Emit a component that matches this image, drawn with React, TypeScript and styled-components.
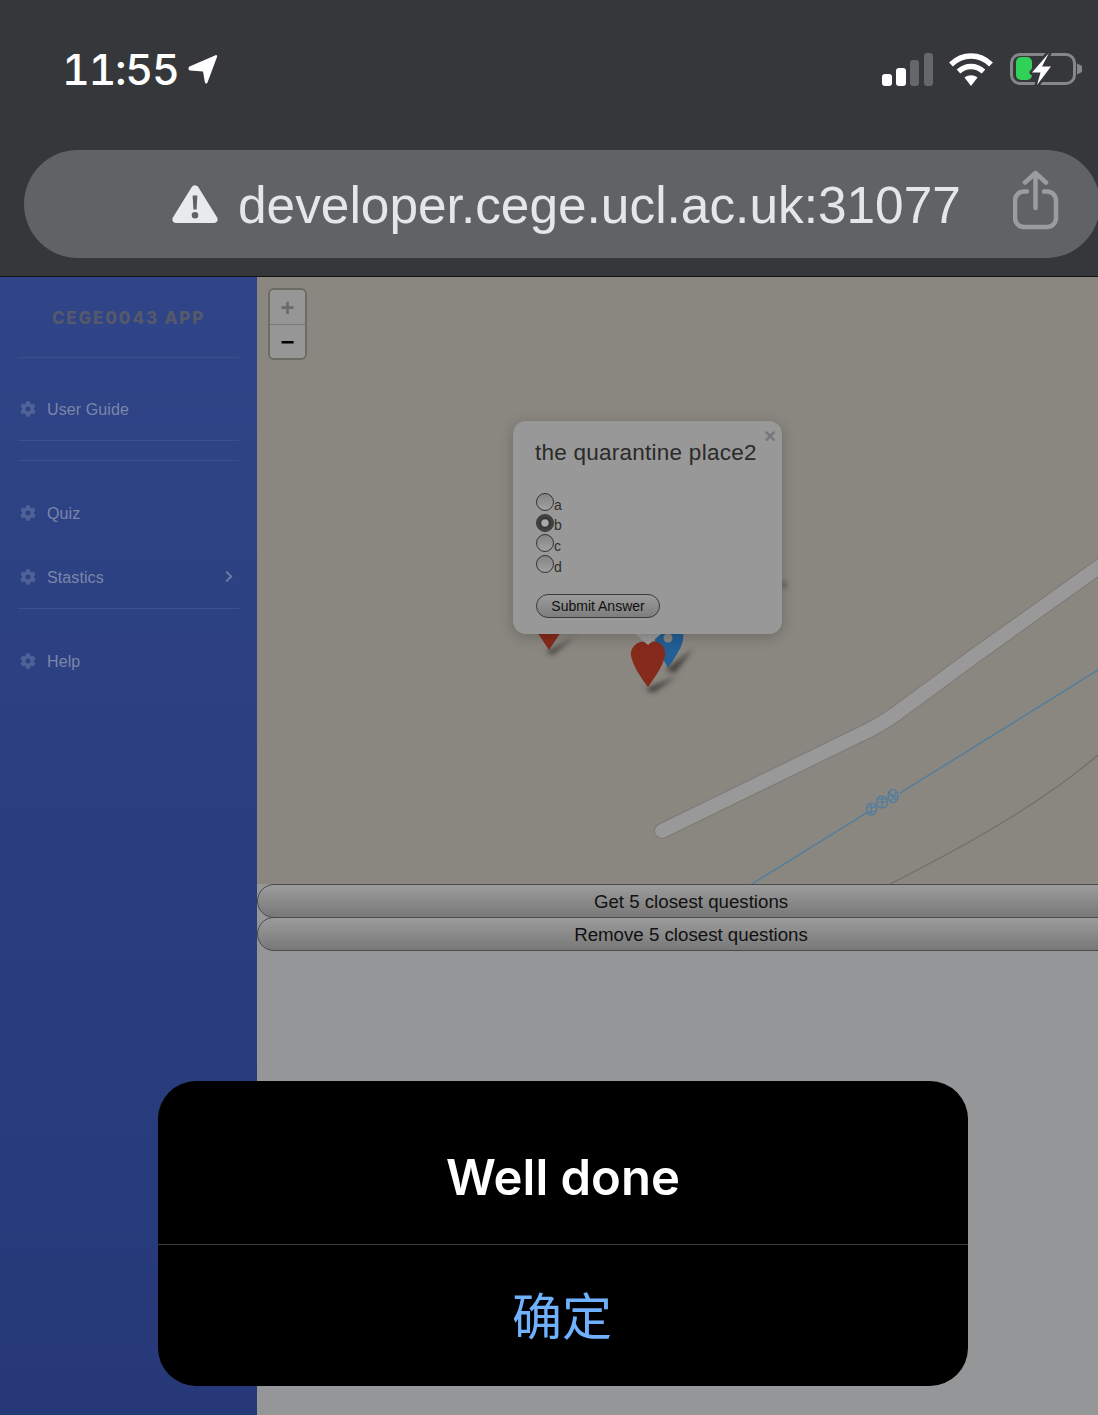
import styled, { createGlobalStyle } from "styled-components";
import { FaChevronRight, FaCog } from "react-icons/fa";

const GlobalStyle = createGlobalStyle`
  html, body {
    margin: 0;
    padding: 0;
    background: #959698;
  }

  * {
    box-sizing: border-box;
  }
`;

const Page = styled.div`
  position: relative;
  width: 1098px;
  height: 1415px;
  overflow: hidden;
  display: flex;
  flex-direction: column;
  background: #959698;
  font-family: "Liberation Sans", Arial, sans-serif;
`;

const BrowserHeader = styled.header`
  height: 277px;
  flex: none;
  background: #36373b;
  border-bottom: 1px solid #111214;
`;

const StatusBar = styled.div`
  height: 150px;
  padding: 46px 16px 0 62px;
  display: flex;
  align-items: flex-start;
  justify-content: space-between;
`;

const Clock = styled.div`
  display: flex;
  align-items: center;
  gap: 9px;
  height: 46px;
  color: #fff;
  font-family: Inter, Roboto, sans-serif;
  font-size: 43px;
  font-weight: 500;
  font-variant-numeric: tabular-nums;
  letter-spacing: -1.3px;
`;

const StatusIcons = styled.div`
  display: flex;
  align-items: center;
  gap: 15px;
  margin-top: 5px;
`;

const AddressBar = styled.div`
  width: 1076px;
  height: 108px;
  margin-left: 24px;
  padding-left: 148px;
  display: flex;
  align-items: center;
  gap: 20px;
  border-radius: 54px;
  background: #5f6366;
  color: #e8e9ed;
`;

const Url = styled.span`
  width: 722px;
  margin-top: 2px;
  font-size: 51.4px;
  line-height: 108px;
  white-space: nowrap;
  color: #e5e6ea;
`;

const ShareSlot = styled.span`
  display: flex;
  margin-left: 33px;
  margin-top: -8px;
`;

const Main = styled.main`
  flex: 1;
  display: flex;
  min-height: 0;
`;

const Sidebar = styled.nav`
  width: 257px;
  flex: none;
  padding: 0 18px;
  background: linear-gradient(180deg, #2f4587 0%, #263878 100%);
`;

const Brand = styled.div`
  height: 80px;
  display: flex;
  align-items: center;
  justify-content: center;
  color: #56586c;
  font-family: Inter, "Liberation Sans", sans-serif;
  font-size: 17px;
  font-weight: 800;
  letter-spacing: 1.8px;
  padding-top: 1px;
`;

const Divider = styled.div<{ $top?: number }>`
  height: 1px;
  margin-top: ${({ $top }) => $top ?? 0}px;
  background: #3b5090;
`;

const NavItem = styled.a<{ $top: number }>`
  height: 62px;
  margin-top: ${({ $top }) => $top}px;
  padding: 2px 5px 0 2px;
  display: flex;
  align-items: center;
  gap: 11px;
  color: #7b86aa;
  font-family: "Liberation Sans", sans-serif;
  font-size: 16px;
  letter-spacing: 0.1px;
  svg:first-child {
    width: 16px;
    height: 16px;
    margin-top: -2px;
    color: #4f6196;
  }
`;

const NavArrow = styled(FaChevronRight)`
  width: 10px;
  height: 13px;
  margin-left: auto;
  margin-top: -4px;
  color: #6c79a3;
`;

const Content = styled.section`
  flex: 1;
  min-width: 0;
  overflow: hidden;
`;

const MapPane = styled.div`
  position: relative;
  height: 607px;
  overflow: hidden;
  background: #8a8780;
`;

const MapDrawing = styled.svg`
  position: absolute;
  inset: 0;
`;

const ZoomControl = styled.div`
  position: absolute;
  left: 11px;
  top: 11px;
  width: 39px;
  border: 2px solid #6e6b66;
  border-radius: 6px;
  overflow: hidden;
`;

const ZoomButton = styled.div<{ $muted?: boolean }>`
  height: 34px;
  padding-top: ${({ $muted }) => ($muted ? 2 : 0)}px;
  display: flex;
  align-items: center;
  justify-content: center;
  background: #969696;
  color: ${({ $muted }) => ($muted ? "#6b6b6b" : "#000")};
  font-family: "Liberation Sans", sans-serif;
  font-size: 24px;
  font-weight: 700;
  & + & {
    border-top: 1px solid #7a7a7a;
  }
`;

const Popup = styled.div`
  position: absolute;
  left: 256px;
  top: 144px;
  width: 269px;
  height: 213px;
  padding: 19px 22px;
  border-radius: 13px;
  background: #989898;
  box-shadow: 0 3px 14px rgba(0, 0, 0, 0.22);
  color: #2a2a2a;
`;

const PopupClose = styled.span`
  position: absolute;
  right: 6px;
  top: 4px;
  color: #767676;
  font-size: 20px;
  font-weight: 700;
  line-height: 22px;
`;

const PopupTitle = styled.div`
  font-size: 22.5px;
  letter-spacing: 0.25px;
  line-height: 26px;
  white-space: nowrap;
  margin-bottom: 26px;
`;

const AnswerList = styled.div`
  display: flex;
  flex-direction: column;
  margin-left: 1px;
  margin-bottom: 20px;
`;

const AnswerRow = styled.label`
  height: 20.6px;
  display: flex;
  align-items: center;
  font-size: 14px;
  color: #2e2e2e;
  span {
    margin-top: 5px;
  }
`;

const Radio = styled.input.attrs({ type: "radio", name: "answer" })`
  appearance: none;
  width: 18px;
  height: 18px;
  margin: 0;
  border: 1px solid #333;
  border-radius: 50%;
  background: linear-gradient(180deg, #858585 0%, #a0a0a0 100%);
  &:checked {
    background: radial-gradient(circle, #aaa 0 3px, #333 4.5px, #5c5c5c 100%);
  }
`;

const SubmitButton = styled.button`
  display: block;
  width: 124px;
  height: 24px;
  margin-left: 1px;
  padding: 0;
  border: 1px solid #3a3a3a;
  border-radius: 12px;
  background: linear-gradient(180deg, #9c9c9c 0%, #7d7d7d 100%);
  color: #111;
  font-family: "Liberation Sans", sans-serif;
  font-size: 14px;
`;

const ActionButton = styled.button`
  display: block;
  width: 868px;
  height: 34px;
  margin: 0;
  padding: 2px 0 0;
  border: 1px solid #4a4a4a;
  border-radius: 17px;
  background: linear-gradient(180deg, #9c9c9c 0%, #787878 100%);
  color: #111;
  font-family: "Liberation Sans", sans-serif;
  font-size: 18.7px;
  & + & {
    margin-top: -1px;
    padding-top: 2px;
  }
`;

const AlertCard = styled.div`
  position: absolute;
  left: 158px;
  top: 1081px;
  width: 810px;
  height: 305px;
  border-radius: 38px;
  background: #000;
  display: flex;
  flex-direction: column;
`;

const AlertTitle = styled.div`
  height: 164px;
  display: flex;
  align-items: center;
  justify-content: center;
  padding-top: 30px;
  color: #fff;
  font-family: Inter, Roboto, sans-serif;
  font-size: 49px;
  font-weight: 600;
  border-bottom: 1px solid #3a3a3a;
`;

const AlertAction = styled.div`
  flex: 1;
  display: flex;
  align-items: center;
  justify-content: center;
  padding: 0 2px 6px 0;
  color: #6fb1fd;
  font-family: "Noto Sans CJK SC", sans-serif;
  font-size: 50px;
  font-weight: 400;
`;

const LocationArrow = () => (
  <svg width="30" height="31" viewBox="0 0 30 31">
    <path
      d="M1.500 12.500 27.500 1.200c1-.5 2 .5 1.600 1.500L19.500 28.500c-.6 1.500-2.300 1.200-2.600-.3L15 17.500 2 16.500C.3 16.300 0 13.300 1.500 12.500Z"
      fill="#fff"
    />
  </svg>
);

const SignalIcon = () => (
  <svg width="52" height="33" viewBox="0 0 52 33">
    <rect x="0" y="21" width="10" height="12" rx="3" fill="#fff" />
    <rect x="14" y="15" width="10" height="18" rx="3" fill="#fff" />
    <rect x="28" y="7" width="9" height="26" rx="3" fill="#66676a" />
    <rect x="42" y="0" width="9" height="33" rx="3" fill="#66676a" />
  </svg>
);

const WifiIcon = () => (
  <svg width="44" height="33" viewBox="0 0 44 33">
    <g fill="none" stroke="#fff" strokeWidth="5.400">
      <path d="M2 11.500C13.500.2 30.500.2 42 11.500" />
      <path d="M9.500 18.500c7.500-6.600 17.500-6.600 25 0" />
    </g>
    <path d="M15.500 24.600c4-3.100 9-3.100 13 0L22 33Z" fill="#fff" />
  </svg>
);

const BatteryIcon = () => (
  <svg width="74" height="36" viewBox="0 0 74 36">
    <rect x="3.500" y="3.500" width="63" height="29" rx="8.500" fill="none" stroke="#85878a" strokeWidth="3" />
    <path d="M69 12.500 74 15v6l-5 2.500Z" fill="#85878a" />
    <rect x="8" y="6" width="16" height="23" rx="5" fill="#31d158" />
    <path
      d="M41 2 24 21.500h8.500L29 34 43 15.500h-9Z"
      fill="#36373b"
      stroke="#36373b"
      strokeWidth="5"
      strokeLinejoin="round"
    />
    <path d="M41 2 24 21.500h8.500L29 34 43 15.500h-9Z" fill="#fff" />
  </svg>
);

const WarningIcon = () => (
  <svg width="46" height="38" viewBox="0 0 46 38">
    <path
      fillRule="evenodd"
      d="M19.600 2.200c1.500-2.700 5.300-2.700 6.800 0l18.700 30.400c1.600 2.600-.3 5.400-3.400 5.400H4.300C1.200 38-.7 35.200.9 32.600ZM20.600 10.500l.8 14h3.200l.8-14ZM23 27a3.300 3.300 0 1 0 0 6.600 3.300 3.300 0 0 0 0-6.600Z"
      fill="#e9eaee"
    />
  </svg>
);

const ShareIcon = () => (
  <svg width="46" height="60" viewBox="0 0 46 60" fill="none" stroke="#999da0" strokeWidth="4.500" strokeLinecap="round" strokeLinejoin="round">
    <path d="M14 21.500h-3a9 9 0 0 0-9 9V48a9 9 0 0 0 9 9h23a9 9 0 0 0 9-9V30.500a9 9 0 0 0-9-9h-3" />
    <path d="M22.500 38V4" />
    <path d="M12 12.500 22.500 3 33 12.500" />
  </svg>
);

const MapArt = () => (
  <MapDrawing width="841" height="607" viewBox="0 0 841 607">
    <defs>
      <filter id="soft" x="-40%" y="-40%" width="180%" height="180%">
        <feGaussianBlur stdDeviation="2.400" />
      </filter>
    </defs>
    <g fill="none" strokeLinecap="round" strokeLinejoin="round">
      <path d="M405 554 600 459Q622 449 640 436L716 380 860 277" stroke="#7c7974" strokeWidth="16" />
      <path d="M405 554 600 459Q622 449 640 436L716 380 860 277" stroke="#999" strokeWidth="14" />
      <path d="M495 607 611 535M643 516 841 393" stroke="#4b7ca3" strokeWidth="1.200" />
      <path d="M633 607C700 573 780 530 841 478" stroke="#716e6a" strokeWidth="1.200" />
      <g stroke="#4b7ca3" strokeWidth="1.200">
        <ellipse cx="614.500" cy="532" rx="5" ry="6" />
        <path d="M610 530h9M611 535l7-1M614 527v10" />
        <ellipse cx="625" cy="525" rx="5.500" ry="6" />
        <path d="M621 525h8M625 520v10M621 522h8" />
        <ellipse cx="636" cy="519" rx="5" ry="6.500" />
        <path d="M632 515l7 8M634 524l5-9M632 519h8" />
      </g>
    </g>
    <path d="M288 375 318 360 296 378Z" fill="#4d4a46" filter="url(#soft)" />
    <path d="M388 412 420 399 396 416Z" fill="#43403c" filter="url(#soft)" />
    <path d="M408 393 436 372 418 396Z" fill="#43403c" filter="url(#soft)" />
    <circle cx="527" cy="308" r="3" fill="#5d5a56" filter="url(#soft)" />
    <path d="M280 355h24l-12 18Z" fill="#862a1c" />
    <path d="M398 355h28c1 8-1 14-5 20-3 6-7 11-10 16-3-6-7-12-10-18-3-6-4-12-3-18Z" fill="#235e94" />
    <circle cx="411" cy="361" r="4.500" fill="#8a8780" />
    <path d="M383 365c4-1 7 1 8 2 1-2 6-3 9-2 6 2 9 8 8 14-2 10-10 21-17 31-7-9-15-21-17-31-1-6 3-12 9-14Z" fill="#862a1c" />
    <path d="M378 357 391 368 404 357Z" fill="#9b9b9b" />
  </MapDrawing>
);

const App = () => (
  <Page>
    <GlobalStyle />
    <BrowserHeader>
      <StatusBar>
        <Clock>
          11:55
          <LocationArrow />
        </Clock>
        <StatusIcons>
          <SignalIcon />
          <WifiIcon />
          <BatteryIcon />
        </StatusIcons>
      </StatusBar>
      <AddressBar>
        <WarningIcon />
        <Url>developer.cege.ucl.ac.uk:31077</Url>
        <ShareSlot>
          <ShareIcon />
        </ShareSlot>
      </AddressBar>
    </BrowserHeader>
    <Main>
      <Sidebar>
        <Brand>CEGE0043 APP</Brand>
        <Divider />
        <NavItem $top={20}>
          <FaCog />
          User Guide
        </NavItem>
        <Divider />
        <Divider $top={19} />
        <NavItem $top={21}>
          <FaCog />
          Quiz
        </NavItem>
        <NavItem $top={2}>
          <FaCog />
          Stastics
          <NavArrow />
        </NavItem>
        <Divider />
        <NavItem $top={21}>
          <FaCog />
          Help
        </NavItem>
      </Sidebar>
      <Content>
        <MapPane>
          <MapArt />
          <ZoomControl>
            <ZoomButton $muted>+</ZoomButton>
            <ZoomButton>−</ZoomButton>
          </ZoomControl>
          <Popup>
            <PopupClose>×</PopupClose>
            <PopupTitle>the quarantine place2</PopupTitle>
            <AnswerList>
              {["a", "b", "c", "d"].map((answer) => (
                <AnswerRow key={answer}>
                  <Radio defaultChecked={answer === "b"} />
                  <span>{answer}</span>
                </AnswerRow>
              ))}
            </AnswerList>
            <SubmitButton>Submit Answer</SubmitButton>
          </Popup>
        </MapPane>
        <ActionButton>Get 5 closest questions</ActionButton>
        <ActionButton>Remove 5 closest questions</ActionButton>
      </Content>
    </Main>
    <AlertCard>
      <AlertTitle>Well done</AlertTitle>
      <AlertAction>确定</AlertAction>
    </AlertCard>
  </Page>
);

export default App;
